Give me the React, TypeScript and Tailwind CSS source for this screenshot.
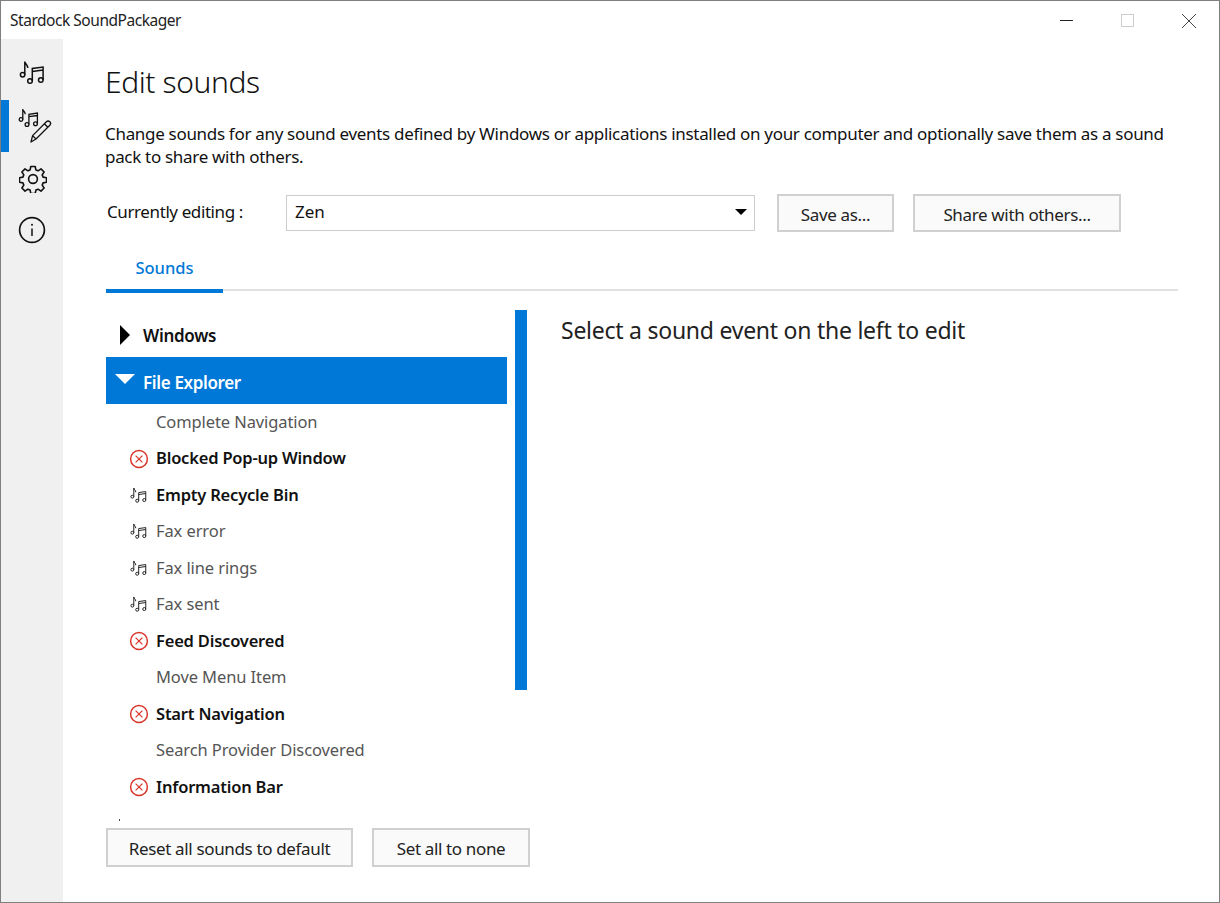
const font = "font-['Noto_Sans','Open_Sans',sans-serif]";

function Notes({ className = '' }: { className?: string }) {
  return (
    <svg viewBox="0 0 26 26" fill="none" stroke="currentColor" strokeWidth="1.5" className={className}>
      <circle cx="3.6" cy="14.8" r="2.2" />
      <path d="M5.8 14.8V1.5c.3 2.6 3 3.2 3 6.5" />
      <circle cx="11" cy="21" r="2.3" />
      <circle cx="21.8" cy="20" r="2.3" />
      <path d="M13.3 21V8.5L24.1 7v13M13.3 11.5l10.8-1.5" />
    </svg>
  );
}

function Gear() {
  return (
    <svg viewBox="0 0 28 28" fill="none" stroke="currentColor" strokeWidth="1.6" strokeLinejoin="round" className="h-[28px] w-[28px]">
      <circle cx="14" cy="14" r="4.4" />
      <path d="M11.8 1.5h4.4l.7 3.4 2.2.9 2.9-1.9 3.1 3.1-1.9 2.9.9 2.2 3.4.7v4.4l-3.4.7-.9 2.2 1.9 2.9-3.1 3.1-2.9-1.9-2.2.9-.7 3.4h-4.4l-.7-3.4-2.2-.9-2.9 1.9-3.1-3.1 1.9-2.9-.9-2.2-3.4-.7v-4.4l3.4-.7.9-2.2-1.9-2.9 3.1-3.1 2.9 1.9 2.2-.9z" />
    </svg>
  );
}

function Info() {
  return (
    <svg viewBox="0 0 28 28" fill="none" stroke="currentColor" className="h-[28px] w-[28px]">
      <circle cx="14" cy="14" r="12.4" strokeWidth="1.7" />
      <path d="M14 12.5v7.5" strokeWidth="1.5" />
      <circle cx="14" cy="8.8" r="1" fill="currentColor" stroke="none" />
    </svg>
  );
}

function EditNotes() {
  return (
    <svg viewBox="0 0 34 36" fill="none" stroke="currentColor" className="h-[36px] w-[34px]">
      <g strokeWidth="1.3">
        <circle cx="3" cy="11.5" r="1.8" />
        <path d="M4.8 11.5V1c.3 2.2 2.4 2.6 2.4 5.2" />
        <circle cx="9" cy="16.5" r="1.9" />
        <circle cx="17.5" cy="15.7" r="1.9" />
        <path d="M10.9 16.5V6.3l8.5-1.2v10.6M10.9 8.7l8.5-1.2" />
      </g>
      <path d="M13 34l1.6-6.4L28.4 13.8c1-1 2.4-1 3.4 0s1 2.4 0 3.4L18 31zM14.6 27.6l3.4 3.4M26.4 15.8l3.4 3.4" strokeWidth="1.3" strokeLinejoin="round" />
    </svg>
  );
}

function XCircle() {
  return (
    <svg viewBox="0 0 20 20" fill="none" stroke="#d9352a" className="h-[20px] w-[20px]">
      <circle cx="10" cy="10" r="8.4" strokeWidth="1.5" />
      <path d="M6.6 6.6l6.8 6.8M13.4 6.6l-6.8 6.8" strokeWidth="1.2" />
    </svg>
  );
}

const rows = [
  { label: 'Complete Navigation', icon: '', bold: false },
  { label: 'Blocked Pop-up Window', icon: 'x', bold: true },
  { label: 'Empty Recycle Bin', icon: 'n', bold: true },
  { label: 'Fax error', icon: 'n', bold: false },
  { label: 'Fax line rings', icon: 'n', bold: false },
  { label: 'Fax sent', icon: 'n', bold: false },
  { label: 'Feed Discovered', icon: 'x', bold: true },
  { label: 'Move Menu Item', icon: '', bold: false },
  { label: 'Start Navigation', icon: 'x', bold: true },
  { label: 'Search Provider Discovered', icon: '', bold: false },
  { label: 'Information Bar', icon: 'x', bold: true },
];

const btn = 'flex items-center justify-center border-2 border-[#d0d0d0] bg-[#fafafa] pt-[3px] text-[17px] tracking-[-0.35px] text-[#222]';

export default function App() {
  return (
    <div className={`${font} flex h-[903px] w-[1220px] flex-col overflow-hidden border border-[#7f7f7f] bg-white text-black`}>
      {/* Title bar */}
      <div className="flex h-[38px] shrink-0 items-center justify-between pt-[1px]">
        <span className="ml-[9px] text-[15.5px] tracking-[-0.47px] text-[#222]">Stardock SoundPackager</span>
        <div className="mr-[23px] flex items-center">
          <div className="h-px w-[13px] bg-[#222]" />
          <div className="ml-[48px] h-[13px] w-[13px] border border-[#cccccc]" />
          <svg viewBox="0 0 14 14" stroke="#444" className="ml-[48px] h-[14px] w-[14px]">
            <path d="M0 0l14 14M14 0L0 14" />
          </svg>
        </div>
      </div>

      <div className="flex min-h-0 flex-1">
        {/* Sidebar */}
        <div className="flex w-[62px] shrink-0 flex-col bg-[#f0f0f0] pt-[9px] text-[#111]">
          <div className="flex h-[52px] items-center justify-center pb-[2px]">
            <Notes className="h-[26px] w-[26px]" />
          </div>
          <div className="relative flex h-[52px] items-center justify-center pl-[6px]">
            <div className="absolute left-0 top-0 h-full w-[8px] bg-[#0078d7]" />
            <EditNotes />
          </div>
          <div className="flex h-[52px] items-center justify-center pl-[2px] pt-[2px]">
            <Gear />
          </div>
          <div className="flex h-[52px] items-center justify-center">
            <Info />
          </div>
        </div>

        {/* Content */}
        <div className="flex min-w-0 flex-1 flex-col pl-[43px] pr-[41px]">
          <h1 className="-ml-px mt-[19px] h-[48px] text-[30px] font-light leading-[48px] tracking-[-0.4px] text-[#111]">Edit sounds</h1>
          <p className="-ml-px mt-[17px] h-[46px] text-[17px] leading-[22.5px] tracking-[-0.31px] text-[#111]">
            Change sounds for any sound events defined by Windows or applications installed on your computer and optionally save them as a sound pack to share with others.
          </p>
          <div className="mt-[25px] flex items-start">
            <span className="ml-[1px] w-[179px] pt-[5px] text-[17px] tracking-[-0.4px] text-[#111]">Currently editing :</span>
            <div className="mt-px flex h-[36px] w-[469px] items-center justify-between border border-[#cccccc] pb-[2px] pl-[8px] pr-[7px] text-[17px] text-[#111]">
              Zen
              <div className="mb-[1px] h-0 w-0 border-x-[6px] border-t-[6px] border-x-transparent border-t-black" />
            </div>
            <div className={`${btn} ml-[22px] h-[38px] w-[117px]`}>Save as...</div>
            <div className={`${btn} ml-[19px] h-[38px] w-[208px]`}>Share with others...</div>
          </div>

          {/* Tabs */}
          <div className="mt-[22px] h-[37px] border-b-2 border-[#e1e1e1]">
            <div className="h-[39px] w-[117px] border-b-[4px] border-[#0078d7] text-center text-[16.5px] font-medium leading-[28px] text-[#0078d7]">
              Sounds
            </div>
          </div>

          <div className="mt-[19px] flex min-h-0 flex-1">
            {/* Tree */}
            <div className="w-[401px] shrink-0">
              <div className="flex h-[47px] items-center pt-[2px] text-[17px] font-semibold tracking-[-0.3px] text-[#111]">
                <div className="ml-[14px] h-0 w-0 border-y-[10px] border-l-[10px] border-y-transparent border-l-black" />
                <span className="ml-[13px] pt-[2px]">Windows</span>
              </div>
              <div className="flex h-[47px] items-center bg-[#0078d7] pt-[3px] text-[17px] font-semibold tracking-[-0.35px] text-white">
                <div className="ml-[9px] mb-[6px] h-0 w-0 border-x-[10px] border-t-[10px] border-x-transparent border-t-white" />
                <span className="ml-[8px] pt-[2px]">File Explorer</span>
              </div>
              {rows.map((r) => (
                <div
                  key={r.label}
                  className={`flex h-[36.5px] items-center pl-[23px] text-[16.5px] ${r.bold ? 'font-semibold tracking-[-0.2px] text-[#111]' : 'tracking-[-0.1px] text-[#555]'}`}
                >
                  <div className="flex w-[27px] justify-start">
                    {r.icon === 'x' && <XCircle />}
                    {r.icon === 'n' && <Notes className="ml-px h-[17px] w-[17px] text-[#222]" />}
                  </div>
                  {r.label}
                </div>
              ))}
              <div className="ml-[13px] mt-[13px] h-[2px] w-px bg-[#444]" />
            </div>

            {/* Scroll thumb */}
            <div className="ml-[8px] h-[380px] w-[12px] shrink-0 bg-[#0078d7]" />

            <div className="ml-[34px] text-[23px] leading-[40px] tracking-[-0.25px] text-[#222]">
              Select a sound event on the left to edit
            </div>
          </div>

          {/* Footer buttons */}
          <div className="mb-[35px] flex">
            <div className={`${btn} h-[39px] w-[247px]`}>Reset all sounds to default</div>
            <div className={`${btn} ml-[19px] h-[39px] w-[158px]`}>Set all to none</div>
          </div>
        </div>
      </div>
    </div>
  );
}
